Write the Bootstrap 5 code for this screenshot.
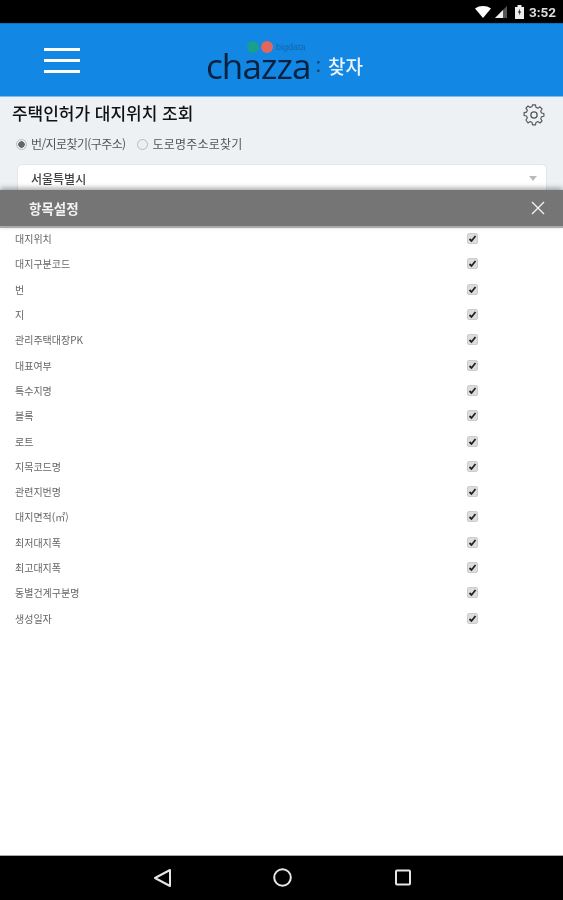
<!DOCTYPE html>
<html lang="ko">
<head>
<meta charset="utf-8">
<title>chazza</title>
<link href="https://cdn.jsdelivr.net/npm/bootstrap@5.3.0/dist/css/bootstrap.min.css" rel="stylesheet">
<style>
html,body{height:100%;margin:0}
body{font-family:"Noto Sans CJK KR","Liberation Sans",sans-serif;background:#fff}
.shell{height:900px;width:563px;overflow:hidden}
.statusbar{height:23px;background:#000;color:#ddd;font:700 13.5px "Roboto",sans-serif;padding-right:7px;gap:5px}
.sig-ic{margin-left:-1px}
.bat-ic{margin-left:3px}
.topbar{height:74px;background:#1287e4;border-top:1px solid #0d6fc4;border-bottom:1px solid #7fbdf0;position:relative}
.burger{width:36px;margin-left:44px;gap:8px}
.burger i{display:block;height:3px;background:#fff}
.brand{position:absolute;left:206px;top:12px;width:170px;height:50px}
.brand-word{position:absolute;left:0;top:18px;font:400 35px/24px "Open Sans",sans-serif;letter-spacing:-.9px;color:#07213f}
.brand-sub{position:absolute;left:70px;top:5px;font:400 9px/12px "Liberation Sans",sans-serif;color:#1467a8}
.brand-dot{position:absolute;top:5px;width:12px;height:12px;border-radius:50%}
.dot-a{left:41px;background:#18a08f}
.dot-b{left:55px;background:#e0675c}
.brand-colon{position:absolute;left:110px;top:19px;font:500 16px/22px "Noto Sans CJK KR",sans-serif;color:#12406e}
.brand-kr{position:absolute;left:122px;top:17px;font:500 19px/26px "Noto Sans CJK KR",sans-serif;color:#e8f3fd;white-space:nowrap}
.panel{height:93px;background:#eef1f4;overflow:hidden;padding:3px 18px 0 12px}
.panel-title{font-size:17px;line-height:26px;font-weight:500;color:#111;letter-spacing:-.02px}
.radios{font-size:12px;line-height:20px;color:#555;margin-top:8px;margin-left:4px;gap:11px}
.radio-a{letter-spacing:-.6px}
.radio-b{letter-spacing:.2px}
.rd{width:11px;height:11px;border:1px solid #bbb;border-radius:50%;background:#eee;display:inline-block;margin-right:4px;vertical-align:-1px}
.radio-b .rd{margin-right:5px}
.rd-on{background:radial-gradient(circle,#666 0 3px,#eee 3.5px)}
.fake-select{margin:10px 0 0 5px;height:40px;background:#fff;border:1px solid #e3e6ea;border-radius:5px;font-size:12px;font-weight:500;color:#444;padding:5px 13px;position:relative;width:530px}
.caret-d{position:absolute;right:9px;top:11px;width:0;height:0;border:4px solid transparent;border-top:5px solid #bbb}
.sheet-head{height:38px;background:#757575;color:#f2f2f2;font-size:13.5px;font-weight:700;padding:0 18px 0 29px;box-shadow:0 -2px 5px rgba(0,0,0,.35);border-bottom:2px solid #aaa;position:relative;z-index:2}
.sheet-body{height:629px;background:#fff;padding-top:0;margin-top:-2px}
.opt-row{height:25.3px;padding-left:15px;font-size:10px;color:#666}
.opt-row .form-check-input{margin:0;width:11px;height:11px;margin-left:452px;position:absolute;border:1px solid #ccc;border-radius:2px;background-color:#ddd;background-size:11px 11px;background-image:url("data:image/svg+xml,%3Csvg xmlns='http://www.w3.org/2000/svg' viewBox='0 0 11 11'%3E%3Cpath d='M2.500 6l2 2 4-5' fill='none' stroke='%23222' stroke-width='1.800'/%3E%3C/svg%3E")}
.navbar-bottom{height:45px;background:#000;border-top:1px solid #aaa}
.soft{filter:blur(.45px)}
</style>
</head>
<body>
<div class="shell d-flex flex-column">
  <div class="statusbar d-flex align-items-center justify-content-end soft">
    <svg width="16" height="12" viewBox="0 0 16 12"><path d="M0 2.500C4.500-.8 11.500-.8 16 2.500L8 12z" fill="#fff"/></svg>
    <svg class="sig-ic" width="12" height="12" viewBox="0 0 12 12"><path d="M12 0V12H0z" fill="#555"/><path d="M8 4V12H0z" fill="#eee"/></svg>
    <svg class="bat-ic" width="9" height="14" viewBox="0 0 9 14"><path d="M0 2h2.500V0h4v2H9v12H0z" fill="#eee"/><path d="M5 3.500L3 7.500h1.500L4 10.500 6 6.500H4.500z" fill="#000"/></svg>
    <span>3:52</span>
  </div>
  <div class="topbar d-flex align-items-center soft">
    <div class="burger d-flex flex-column"><i></i><i></i><i></i></div>
    <div class="brand">
      <span class="brand-dot dot-a"></span><span class="brand-dot dot-b"></span>
      <span class="brand-sub">bigdata</span>
      <span class="brand-word">chazza</span>
      <span class="brand-colon">:</span>
      <span class="brand-kr">찾자</span>
    </div>
  </div>
  <div class="panel soft">
    <div class="d-flex justify-content-between align-items-start">
      <div class="panel-title">주택인허가 대지위치 조회</div>
      <svg width="22" height="22" viewBox="0 0 24 24" class="mt-1" fill="none" stroke="#555" stroke-width="1.400" stroke-linejoin="round"><circle cx="12" cy="12" r="3.400"/><path d="M10.200 2h3.600l.6 3 2.300 1 2.600-1.700 2.500 2.600-1.700 2.500 1 2.400 2.900.6v3.400l-2.900.6-1 2.400 1.700 2.500-2.500 2.600-2.600-1.700-2.300 1-.6 3h-3.600l-.6-3-2.300-1-2.600 1.700L2.200 20.300l1.700-2.500-1-2.400L0 14.800v-3.400l2.900-.6 1-2.400L2.200 5.900 4.700 3.300l2.600 1.700 2.300-1z" transform="translate(1.200 -.8) scale(.9)"/></svg>
    </div>
    <div class="radios d-flex">
      <span class="radio-a"><span class="rd rd-on"></span>번/지로찾기(구주소)</span>
      <span class="radio-b"><span class="rd"></span>도로명주소로찾기</span>
    </div>
    <div class="fake-select">서울특별시<span class="caret-d"></span></div>
  </div>
  <div class="sheet-head d-flex align-items-center justify-content-between">
    <span class="soft">항목설정</span>
    <svg width="14" height="14" viewBox="0 0 14 14" class="soft"><path d="M1 1l12 12M13 1L1 13" stroke="#f2f2f2" stroke-width="1.400"/></svg>
  </div>
  <div class="sheet-body soft"></div>
  <div class="navbar-bottom d-flex align-items-center justify-content-center soft">
    <svg width="260" height="22" viewBox="0 0 260 22" fill="none" stroke="#e6e6e6" stroke-width="2" stroke-linejoin="round"><path d="M18 3V19L3 11z"/><circle cx="130.500" cy="10.500" r="8.300"/><rect x="244" y="3.500" width="14" height="14" rx="1"/></svg>
  </div>
</div>
<script>
const names=["대지위치","대지구분코드","번","지","관리주택대장PK","대표여부","특수지명","블록","로트","지목코드명","관련지번명","대지면적(㎡)","최저대지폭","최고대지폭","동별건계구분명","생성일자"];
const body=document.querySelector('.sheet-body');
body.innerHTML=names.map(n=>`<div class="opt-row d-flex align-items-center"><span>${n}</span><input class="form-check-input" type="checkbox" checked aria-label="${n}"></div>`).join('');
</script>
<script src="https://cdn.jsdelivr.net/npm/bootstrap@5.3.0/dist/js/bootstrap.bundle.min.js"></script>
</body>
</html>
